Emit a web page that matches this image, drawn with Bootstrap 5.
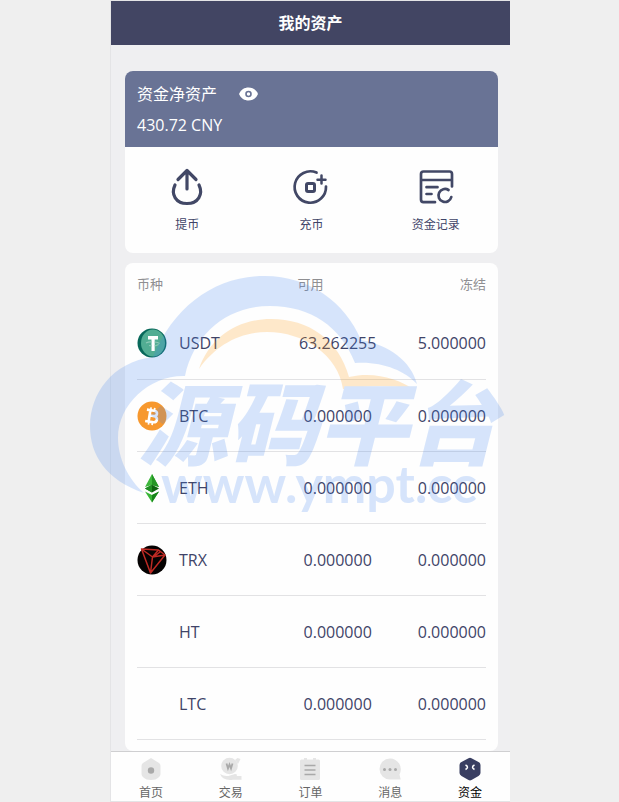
<!DOCTYPE html>
<html lang="zh-CN">
<head>
<meta charset="utf-8">
<meta name="viewport" content="width=device-width, initial-scale=1">
<title>我的资产</title>
<link href="https://cdn.jsdelivr.net/npm/bootstrap@5.3.0/dist/css/bootstrap.min.css" rel="stylesheet">
<style>
body{background:#efefef;color:#3f4468;font-family:"Open Sans","Noto Sans CJK SC",sans-serif;font-size:16px;line-height:24px;padding-left:1px}
.phone{max-width:400px;background:#efeff1;border:1px solid #e4e4e6;border-right:0}
.topbar{background:#424563;height:44px}
.topbar h1{font-size:16px;line-height:24px}
.content{padding:26px 12px 0 14px}
.panel{background:#fefefe;border-radius:8px;overflow:hidden}
.networth{background:#697395;height:76px;padding:11px 12px 8px}
.networth p{line-height:24px}
.networth button{margin-left:22px}
.networth .amount{margin-top:7px}
.actions{height:106px;padding-top:20px}
.actions a{color:#3f4468;font-size:12px;line-height:18px}
.actions svg{margin-bottom:9px}
.coins{margin-top:10px;padding:0 12px 11px}
.coins table{table-layout:fixed}
.coins thead th{height:44px;font-size:13px;font-weight:400;color:#8f8f92;padding:0 0 2px;vertical-align:middle}
.coins tbody tr{height:72px;border-bottom:1px solid #e2e2e4}
.coins tbody td,.coins tbody th{padding:1px 0 0;font-weight:400;vertical-align:middle}
.c-name{width:46%}.c-free{width:23%}
.coin-pic{width:30px;height:30px;margin-right:12px}
.tabs{height:50px;background:#fefefe;border-top:1px solid #cfcfd1}
.tabs a{color:#666;font-size:12px;line-height:18px;padding-top:5px}
.tabs a.on{color:#000}
.tabs svg{margin-bottom:3px}
.stamp{top:274px;left:-21px;pointer-events:none;z-index:2}
.stamp text{fill:#3c82f0;font-weight:900}
.stamp-cn{font-family:"Noto Sans CJK SC",sans-serif;font-style:italic;font-size:90px}
.stamp-url{font-family:Lato,sans-serif;font-size:52px}
.stamp .stamp-url{font-weight:700}
</style>
</head>
<body>
<div class="phone mx-auto min-vh-100 d-flex flex-column position-relative">
<header class="topbar d-flex align-items-center justify-content-center text-white"><h1 class="m-0 fw-bold">我的资产</h1></header>
<main class="content flex-grow-1">
<section class="panel">
<div class="networth text-white">
<div class="d-flex align-items-center"><p class="m-0">资金净资产</p>
<button type="button" class="btn p-0 border-0 d-flex" aria-label="显示或隐藏资产"><svg width="20" height="14" viewBox="0 0 20 14"><path d="M0 7C2 2.500 5.500.500 9.500.500S17 2.500 19 7c-2 4.500-5.500 6.500-9.500 6.500S2 11.500 0 7Z" fill="#fff"/><circle cx="9.500" cy="7" r="2.500" fill="none" stroke="#697395" stroke-width="1.600"/></svg></button></div>
<p class="amount mb-0">430.72 CNY</p>
</div>
<nav class="actions row g-0 text-center" aria-label="资产操作">
<a href="#" class="col text-decoration-none"><svg class="d-block mx-auto" width="40" height="40" viewBox="0 0 40 40" fill="none" stroke="#424866" stroke-linecap="round" stroke-linejoin="round"><path stroke-width="3.200" d="M20 22V3.500M11 12.500l9-9 9 9"/><path stroke-width="3.200" d="M8 18C3.500 27.500 9 36.500 20 36.500s16.500-9 12-18.500"/></svg>提币</a>
<a href="#" class="col text-decoration-none"><svg class="d-block mx-auto" width="40" height="40" viewBox="0 0 40 40" fill="none" stroke="#424866" stroke-linecap="round" stroke-linejoin="round"><path stroke-width="2.700" d="M25.500 5.600A15.700 15.700 0 1 0 35 19.500"/><path stroke-width="2.500" d="M30.500 8.500v8M26.500 12.700h8"/><rect x="15.500" y="16.500" width="8" height="8" rx="1.500" stroke-width="3"/></svg>充币</a>
<a href="#" class="col text-decoration-none"><svg class="d-block mx-auto" width="40" height="40" viewBox="0 0 40 40" fill="none" stroke="#424866" stroke-width="2.700" stroke-linecap="round" stroke-linejoin="round"><path d="M19 35.200H7.500Q5 35.200 5 32.500V7Q5 4.500 7.500 4.500h26Q36 4.500 36 7V19.500M5 13h31M10.500 20.200h11M10.500 27h5"/><path d="M32.500 23A6.500 6.500 0 1 0 35.300 30"/></svg>资金记录</a>
</nav>
</section>
<section class="panel coins">
<table class="w-100">
<thead><tr><th class="c-name" scope="col">币种</th><th class="c-free" scope="col">可用</th><th class="text-end" scope="col">冻结</th></tr></thead>
<tbody>
<tr><th scope="row"><div class="d-flex align-items-center"><svg class="coin-pic" viewBox="0 0 30 30"><circle cx="15" cy="15" r="14.500" fill="#08685a"/><ellipse cx="16" cy="15" rx="12" ry="13.500" fill="#52ad93"/><path d="M11 8h10v3.500h-3.300V23h-3.200V11.500H11z" fill="#fff"/><path d="M9 15q3-1.500 5.500-1M17.700 14q3 .3 5 1.500M12 17.500l3 .5M17.700 18l4-1.500" fill="none" stroke="#8cc8b5" stroke-width="1.200"/></svg>USDT</div></th><td class="text-center">63.262255</td><td class="text-end">5.000000</td></tr>
<tr><th scope="row"><div class="d-flex align-items-center"><svg class="coin-pic" viewBox="0 0 30 30"><circle cx="15" cy="15" r="14.500" fill="#f7982e"/><g transform="rotate(9 15 15)" fill="none" stroke="#fff"><path stroke-width="2.600" d="M9 9.500h7.200c4.500 0 4.500 5.300 0 5.300h-3.500M16 14.800c6 0 5.800 6.200.2 6.200H9M12.500 9.500V21"/><path stroke-width="1.700" d="M12.800 6.500v3M16.500 6.500v3M12.800 21v3M16.500 21v3"/></g></svg>BTC</div></th><td class="text-center">0.000000</td><td class="text-end">0.000000</td></tr>
<tr><th scope="row"><div class="d-flex align-items-center"><svg class="coin-pic" viewBox="0 0 30 30"><path d="M15 1 22 14 15 12 8 14Z" fill="#3fb83d"/><path d="M15 1l7 13-7-2z" fill="#249625"/><path d="m8 15.500 7-3.700 7 3.700-7 4z" fill="#0c650e"/><path d="m8 15.500 7-3.700v7.700z" fill="#209023"/><path d="m8 18.500 7 3.500 7-3.500-7 11z" fill="#39b637"/><path d="m15 22 7-3.500-7 11z" fill="#178419"/></svg>ETH</div></th><td class="text-center">0.000000</td><td class="text-end">0.000000</td></tr>
<tr><th scope="row"><div class="d-flex align-items-center"><svg class="coin-pic" viewBox="0 0 30 30"><circle cx="15" cy="15" r="14.500" fill="#050202"/><path d="m4.500 4 17 1L28 10 13.500 28Z M4.500 4 15.500 12 28 10M15.500 12l6-7M15.500 12l-2 16M17 11.500l6-4.500" fill="none" stroke="#bd2a24" stroke-width="1.500" stroke-linejoin="round"/></svg>TRX</div></th><td class="text-center">0.000000</td><td class="text-end">0.000000</td></tr>
<tr><th scope="row"><div class="d-flex align-items-center"><span class="coin-pic"></span>HT</div></th><td class="text-center">0.000000</td><td class="text-end">0.000000</td></tr>
<tr><th scope="row"><div class="d-flex align-items-center"><span class="coin-pic"></span>LTC</div></th><td class="text-center">0.000000</td><td class="text-end">0.000000</td></tr>
</tbody>
</table>
</section>
</main>
<nav class="tabs row g-0 text-center" aria-label="主导航">
<a href="#" class="col text-decoration-none"><svg class="d-block mx-auto" width="24" height="24" viewBox="0 0 24 24"><path d="M12 1 20 6Q21.500 7 21.500 9v8q0 2-2 3.500Q17 23 12 23t-7.500-2.500q-2-1.500-2-3.500V9Q2.500 7 4 6Z" fill="#e5e5e5"/><circle cx="12" cy="13.500" r="3.200" fill="#a9a9a9"/></svg>首页</a>
<a href="#" class="col text-decoration-none"><svg class="d-block mx-auto" width="24" height="24" viewBox="0 0 24 24"><circle cx="10.500" cy="9" r="8.300" fill="#e5e5e5"/><path d="M16 3l2.500-2 3 1L19 7M1 17q5 3 10 1.500l5-1.500q3 0 1.500 2h5v3.700H14Q4 24 1 17Z" fill="#e5e5e5"/><path d="m7.500 6.500 1.500 5L10.500 7.500l1.500 4 1.500-5" fill="none" stroke="#a9a9a9" stroke-width="1.800"/></svg>交易</a>
<a href="#" class="col text-decoration-none"><svg class="d-block mx-auto" width="24" height="24" viewBox="0 0 24 24"><path d="M3.500 2.500H6V1h3v1.500h6V1h3v1.500h2.500Q22 2.500 22 4v17.500q0 1.500-1.500 1.500h-17Q2 23 2 21.500V4Q2 2.500 3.500 2.500Z" fill="#e5e5e5"/><path d="M6.500 8.500h11M6.500 13h11M6.500 17.500h11" stroke="#a9a9a9" stroke-width="1.600"/></svg>订单</a>
<a href="#" class="col text-decoration-none"><svg class="d-block mx-auto" width="24" height="24" viewBox="0 0 24 24"><path d="M12 1.500a10.800 10.800 0 0 1 9.500 16l1.200 5H12a10.500 10.500 0 0 1 0-21Z" fill="#e5e5e5"/><g fill="#a9a9a9"><circle cx="6.500" cy="12.500" r="1.500"/><circle cx="12" cy="12.500" r="1.500"/><circle cx="17.500" cy="12.500" r="1.500"/></g></svg>消息</a>
<a href="#" class="col text-decoration-none on" aria-current="page"><svg class="d-block mx-auto" width="24" height="24" viewBox="0 0 24 24"><path d="M10.500 1.200q1.500-.7 3 0L20.500 5Q22.500 6 22.500 8v8q0 1.700-2 3l-7 4q-1.500.8-3 0l-7-4q-2-1.300-2-3V8q0-2 2-3Z" fill="#393e61"/><path d="M7.500 8q4 2 0 4.500M16.500 8q-4 2 0 4.500" fill="none" stroke="#fff" stroke-width="1.500"/></svg>资金</a>
</nav>
<svg class="stamp position-absolute" width="430" height="250" viewBox="0 0 430 250" aria-hidden="true">
<g opacity=".2">
<path fill="#3c82f0" d="M54 218C16 205 0 180 0 151 0 119 22 87 63 82 84 31 125 1 175 1 219 1 255 27 271 65 299 70 321 86 327 109 314 95 291 86 265 88 251 52 221 31 180 31 137 31 104 59 95 101 60 100 28 129 28 163 28 183 38 204 54 218Z"/>
<path fill="#ff9600" d="M109 94C119 64 146 44 181 44 219 44 249 65 259 102 284 96 309 104 323 114 299 110 278 111 253 114 248 80 214 57 177 57 149 57 125 71 109 94Z"/>
<text class="stamp-cn" x="48" y="183">源码平台</text>
<text class="stamp-url" x="71" y="228">www.ympt.cc</text>
</g></svg>
</div>
<script src="https://cdn.jsdelivr.net/npm/bootstrap@5.3.0/dist/js/bootstrap.bundle.min.js"></script>
</body>
</html>
